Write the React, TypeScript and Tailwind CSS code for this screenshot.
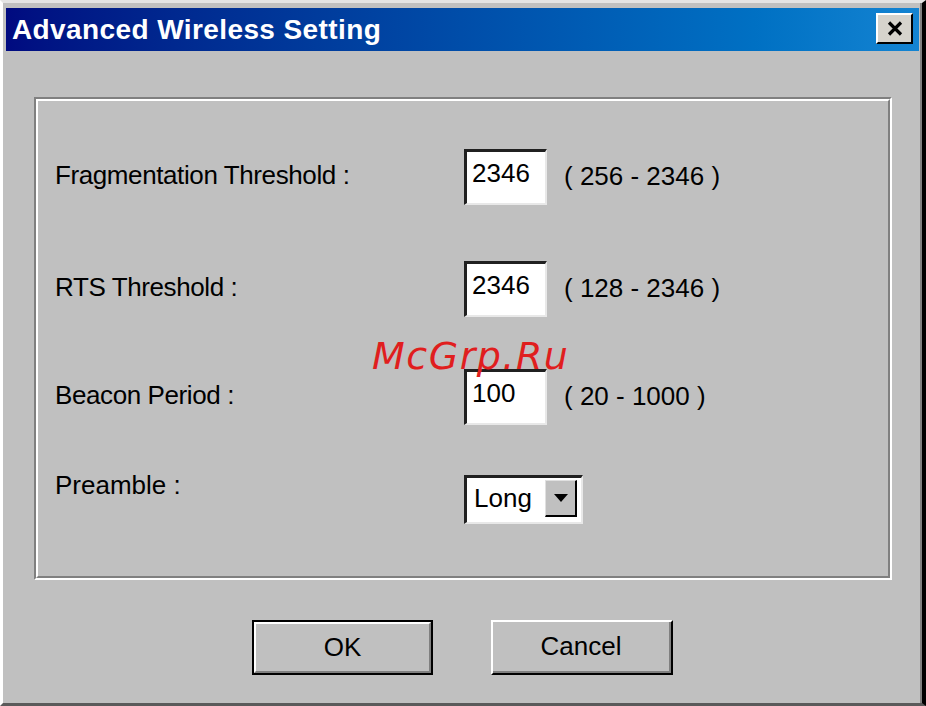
import React from 'react';

const font = { fontFamily: '"Liberation Sans", Arial, sans-serif' };

function Field({ value }: { value: string }) {
  return (
    <div className="w-[83px] h-[56px] bg-white border-t-[3px] border-l-[3px] border-t-[#202020] border-l-[#202020] border-b-2 border-r-2 border-b-[#e8e8e8] border-r-[#e8e8e8] pl-[5px] pt-[6px] text-[26px] leading-[30px] text-black">
      {value}
    </div>
  );
}

function Row({ label, value, range, top }: { label: string; value: string; range: string; top: string }) {
  return (
    <div className={`flex items-start ${top}`}>
      <div className="w-[409px] mt-[11px] text-[26px] leading-[30px] text-black tracking-[-0.4px]">{label}</div>
      <Field value={value} />
      <div className="ml-[17px] mt-[12px] text-[26px] leading-[30px] text-black">{range}</div>
    </div>
  );
}

export default function App() {
  return (
    <div
      className="w-[926px] h-[706px] bg-[#c0c0c0] border-t-[3px] border-l-[3px] border-t-[#e4e4e4] border-l-white border-r-[4px] border-r-black border-b-[3px] border-b-[#5a5a5a] overflow-hidden"
      style={font}
    >
      <div className="h-full border-r-2 border-r-[#808080] pt-[5px] pl-[3px] pr-[1px] flex flex-col">
        {/* title bar */}
        <div className="h-[43px] flex items-center justify-between pl-[6px] pr-[6px] bg-gradient-to-r from-[#000a80] to-[#1484d2]">
          <span className="text-white font-bold text-[28px] leading-none tracking-[0.4px]">Advanced Wireless Setting</span>
          <button className="w-[37px] h-[31px] bg-[#d6d3cc] border-t-2 border-l-2 border-t-white border-l-white border-b-2 border-r-2 border-b-black border-r-black flex items-center justify-center mt-[-2px]">
            <svg width="16" height="15" viewBox="0 0 16 15">
              <path d="M2 1.5 L14 13.5 M14 1.5 L2 13.5" stroke="black" strokeWidth="3.2" />
            </svg>
          </button>
        </div>

        {/* group box */}
        <div className="mt-[46px] ml-[28px] mr-[27px] h-[483px] border-t-2 border-l-2 border-t-[#808080] border-l-[#808080] border-b-2 border-r-2 border-b-white border-r-white">
          <div className="h-full border-t-2 border-l-2 border-t-white border-l-white border-b-2 border-r-2 border-b-[#808080] border-r-[#808080] pl-[17px] relative">
            <Row label="Fragmentation Threshold :" value="2346" range="( 256 - 2346 )" top="mt-[48px]" />
            <Row label="RTS Threshold :" value="2346" range="( 128 - 2346 )" top="mt-[56px]" />
            <Row label="Beacon Period :" value="100" range="( 20 - 1000 )" top="mt-[52px]" />

            <div className="flex items-start mt-[45px]">
              <div className="w-[409px] text-[26px] leading-[30px] text-black">Preamble :</div>
              <div className="mt-[5px] w-[119px] h-[49px] bg-white border-t-[3px] border-l-[3px] border-t-[#202020] border-l-[#202020] border-b-2 border-r-2 border-b-[#e8e8e8] border-r-[#e8e8e8] flex items-start">
                <span className="pl-[7px] pt-[5px] text-[26px] leading-[30px] text-black flex-1">Long</span>
                <div className="mt-[2px] mr-[4px] w-[32px] h-[37px] bg-[#c0c0c0] border-t border-l border-t-[#e0e0e0] border-l-[#e0e0e0] border-b-2 border-r-2 border-b-black border-r-black flex items-center justify-center">
                  <svg width="14" height="8" viewBox="0 0 14 8">
                    <path d="M0 0 H14 L7 8 Z" fill="black" />
                  </svg>
                </div>
              </div>
            </div>

            <div
              className="absolute left-[334px] top-[236px] text-[38px] leading-none italic text-[#e01e1e] tracking-[1.5px]"
              style={{ fontFamily: '"DejaVu Sans", sans-serif' }}
            >
              McGrp.Ru
            </div>
          </div>
        </div>

        {/* buttons */}
        <div className="mt-[40px] flex justify-center gap-[58px]">
          <button className="w-[181px] h-[55px] border-2 border-black bg-[#c0c0c0]">
            <div className="h-full border-t-2 border-l-2 border-t-white border-l-white border-b-2 border-r-2 border-b-[#808080] border-r-[#808080] flex items-center justify-center text-[26px] text-black">
              OK
            </div>
          </button>
          <button className="w-[182px] h-[55px] bg-[#c0c0c0] border-t-2 border-l-2 border-t-white border-l-white border-b-2 border-r-2 border-b-black border-r-black">
            <div className="h-full border-b-2 border-r-2 border-b-[#808080] border-r-[#808080] flex items-center justify-center text-[26px] text-black">
              Cancel
            </div>
          </button>
        </div>
      </div>
    </div>
  );
}
